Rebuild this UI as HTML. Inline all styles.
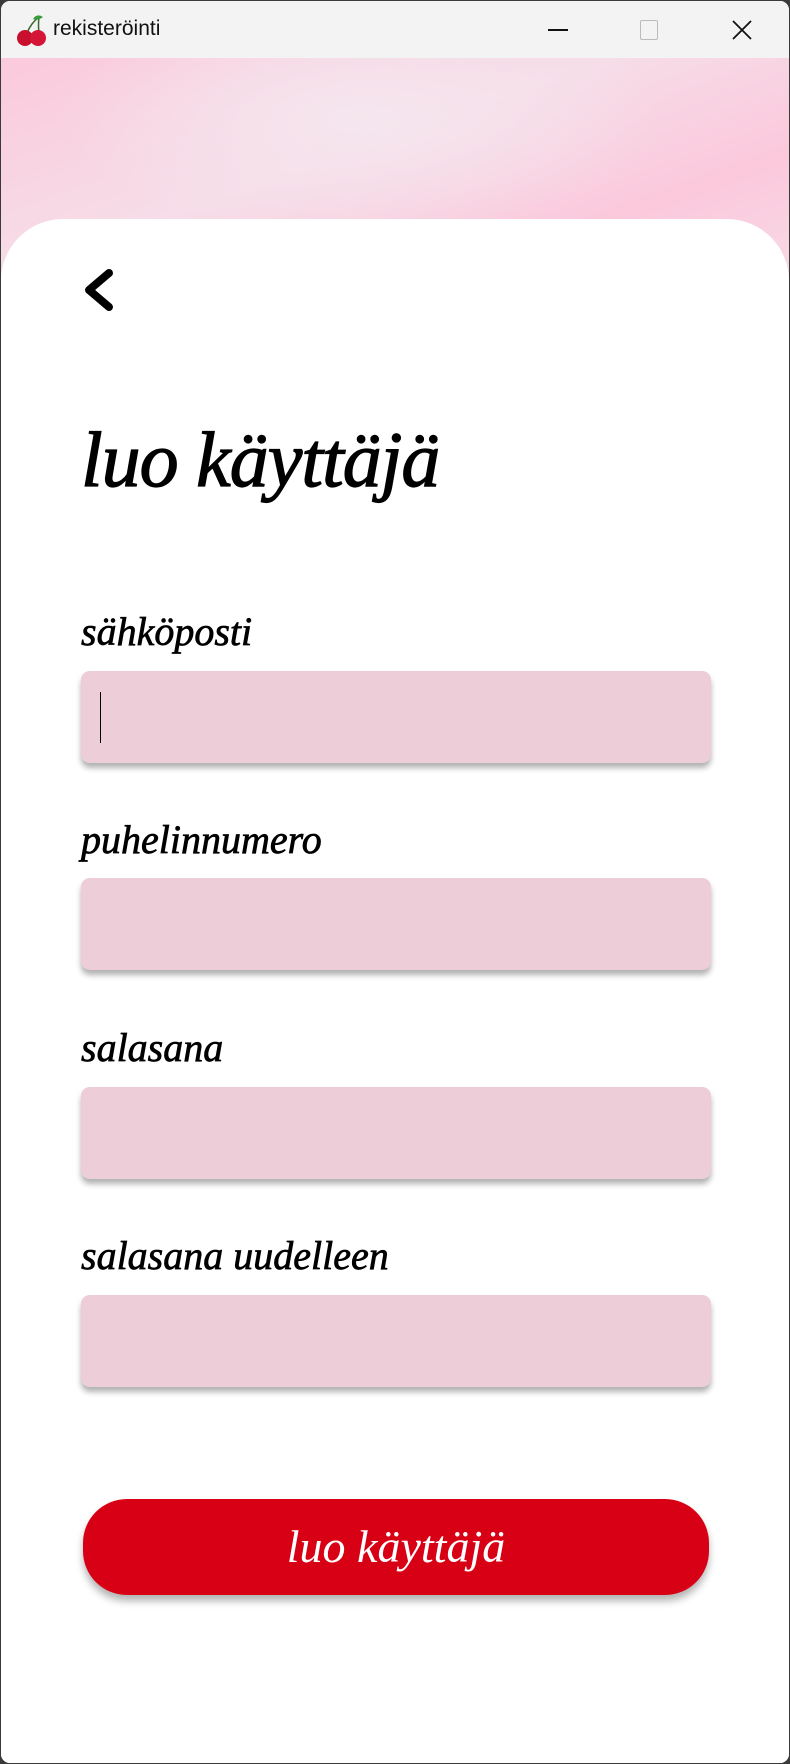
<!DOCTYPE html>
<html><head><meta charset="utf-8"><style>
*{margin:0;padding:0;box-sizing:border-box}
body{width:790px;height:1764px;background:#3a3a3a;position:relative;overflow:hidden;font-family:"Liberation Serif",serif}
.win{position:absolute;left:1px;top:1px;width:788px;height:1762px;background:#fff;border-radius:9px;overflow:hidden}
.tb{position:absolute;left:0;top:0;width:100%;height:57px;background:#f3f3f3}
.tb .t{position:absolute;left:52px;top:16px;font:21px "Liberation Sans",sans-serif;color:#111}
.hdr{position:absolute;left:0;top:57px;width:100%;height:260px;background:radial-gradient(ellipse 300px 120px at 360px 60px,#f5e6ee,transparent),linear-gradient(160deg,#fbc9dc 0%,#f6dde8 40%,#fbc8dc 70%,#f7dfe9 100%)}
.card{position:absolute;left:0;top:218px;width:100%;height:1600px;background:#fff;border-radius:62px 62px 0 0}
.h1{position:absolute;left:80px;top:414px;font-style:italic;font-size:78px;color:#000;-webkit-text-stroke:1.2px #000;letter-spacing:-1px}
.lab{position:absolute;left:80px;font-style:italic;font-size:40px;color:#000;-webkit-text-stroke:0.7px #000}
.in{position:absolute;left:80px;width:630px;height:92px;background:#eccdd8;border-radius:9px;box-shadow:0 5px 6px rgba(0,0,0,.3)}
.btn{position:absolute;left:82px;top:1498px;width:626px;height:96px;background:#d80014;border-radius:44px;box-shadow:0 6px 8px rgba(0,0,0,.3);color:#fff;font-style:italic;font-size:46px;text-align:center;line-height:96px}
</style></head><body><div class="win">
<div class="tb">
<svg style="position:absolute;left:14px;top:12px" width="34" height="34" viewBox="0 0 34 34"><path d="M12 20 Q16 10 24 4 M24 4 Q23 12 24 20" stroke="#3a6a2a" stroke-width="1.5" fill="none"/><path d="M18 6 Q22 0 28 4 Q23 8 18 6Z" fill="#3a9a3a"/><circle cx="10" cy="25" r="8" fill="#c8102e"/><circle cx="23" cy="25" r="8" fill="#d41535"/></svg>
<div class="t">rekisteröinti</div>
<div style="position:absolute;left:547px;top:28px;width:20px;height:2px;background:#111"></div>
<div style="position:absolute;left:639px;top:19px;width:18px;height:20px;border:1.5px solid #bbb;border-radius:2px"></div>
<svg style="position:absolute;left:730px;top:18px" width="22" height="22"><path d="M2 2L20 20M20 2L2 20" stroke="#111" stroke-width="1.8"/></svg>
</div>
<div class="hdr"></div>
<div class="card"></div>
<svg style="position:absolute;left:78px;top:264px" width="40" height="50" viewBox="0 0 40 50"><path d="M30 8 L10 25 L30 42" stroke="#000" stroke-width="8" fill="none" stroke-linecap="round" stroke-linejoin="round"/></svg>
<div class="h1">luo käyttäjä</div>
<div class="lab" style="top:607px">sähköposti</div>
<div class="in" style="top:670px"></div>
<div style="position:absolute;left:99px;top:691px;width:1px;height:51px;background:#000"></div>
<div class="lab" style="top:815px">puhelinnumero</div>
<div class="in" style="top:877px"></div>
<div class="lab" style="top:1023px">salasana</div>
<div class="in" style="top:1086px"></div>
<div class="lab" style="top:1231px">salasana uudelleen</div>
<div class="in" style="top:1294px"></div>
<div class="btn">luo käyttäjä</div>
</div></body></html>
